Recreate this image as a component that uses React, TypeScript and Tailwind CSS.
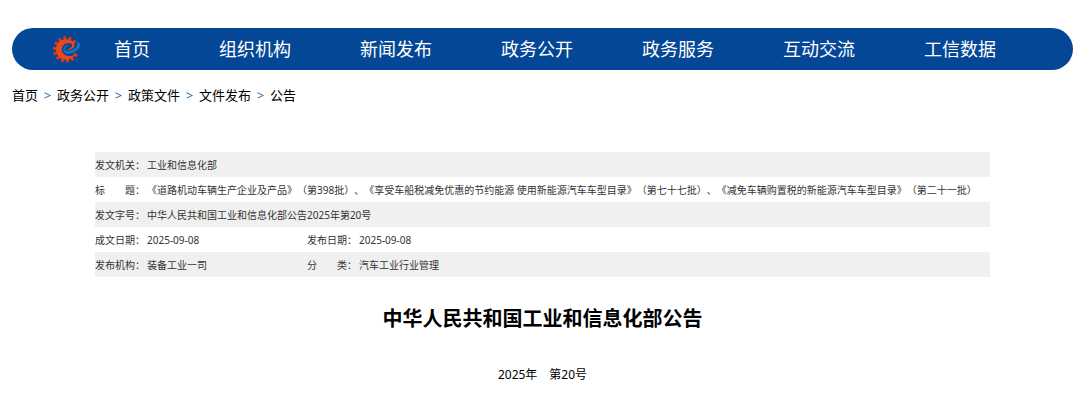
import React from "react";

const navItems = [
  "首页",
  "组织机构",
  "新闻发布",
  "政务公开",
  "政务服务",
  "互动交流",
  "工信数据",
];

const crumbs = ["首页", "政务公开", "政策文件", "文件发布", "公告"];

const rows = [
  [{ label: "发文机关：", value: "工业和信息化部" }],
  [
    {
      label: "标　　题：",
      value:
        "《道路机动车辆生产企业及产品》（第398批）、《享受车船税减免优惠的节约能源 使用新能源汽车车型目录》（第七十七批）、《减免车辆购置税的新能源汽车车型目录》（第二十一批）",
    },
  ],
  [{ label: "发文字号：", value: "中华人民共和国工业和信息化部公告2025年第20号" }],
  [
    { label: "成文日期：", value: "2025-09-08" },
    { label: "发布日期：", value: "2025-09-08" },
  ],
  [
    { label: "发布机构：", value: "装备工业一司" },
    { label: "分　　类：", value: "汽车工业行业管理" },
  ],
];

const teeth = [120, 146, 172, 198, 224, 250, 276, 302, 328, 354, 380, 406];

function Logo() {
  return (
    <svg viewBox="0 0 28 28" className="size-7 shrink-0" aria-hidden="true">
      <g fill="#dc3519">
        {teeth.map((deg) => (
          <rect
            key={deg}
            x="11.5"
            y="1.4"
            width="3"
            height="4"
            rx="0.4"
            transform={`rotate(${deg} 13 14.5)`}
          />
        ))}
      </g>
      {/* red body of the e */}
      <path
        d="M20.400 7.400C18.400 5 15.600 4 12.600 4.200C7 4.600 3 9 3.100 14.600C3.200 20.400 7.600 24.800 13.200 24.800C17.400 24.800 20.800 22.400 22.400 19C19.800 21.200 16.200 21.600 13.400 20.600C10.200 19.400 8.400 16.800 8.800 13.800C9.200 10.600 12 8.200 15.400 8C17.600 7.900 19 8.600 19.200 10C19.400 12 16.600 14 12.600 14.900C17 15.500 21 13.400 21.600 10.600C21.800 9.400 21.300 8.300 20.400 7.400Z"
        fill="#ef4715"
      />
      {/* blue swoosh */}
      <path
        d="M23.200 7.200C26 6.800 27.600 8.200 27 10.800C26 15 20.400 18.800 15.200 18.700C12.400 18.600 10.600 17.400 10.400 15.400C14.600 17 20.400 15.600 23.200 12.200C24.600 10.400 24.600 8.600 23.200 7.200Z"
        fill="#1674bd"
      />
      <path
        d="M10.400 15.400C10.200 12.400 12.400 9.800 16.200 9.400C14 10.600 12.600 12 12.200 13.600C12 14.600 12.100 15.300 12.600 16Z"
        fill="#1674bd"
      />
    </svg>
  );
}

function App() {
  return (
    <div
      lang="zh-CN"
      className="bg-white pt-7 pr-[7px] pl-3 pb-5 text-black font-['Noto_Sans','Noto_Sans_CJK_SC',sans-serif] [text-spacing-trim:space-all]"
    >
      <nav className="flex h-[42px] items-center rounded-full bg-[#054797] pl-[41px]">
        <Logo />
        <ul className="ml-[33px] flex gap-[69px] text-lg whitespace-nowrap text-white">
          {navItems.map((item) => (
            <li key={item}>
              <a href="#">{item}</a>
            </li>
          ))}
        </ul>
      </nav>

      <div className="mt-[15px] flex text-[13px] leading-5">
        {crumbs.map((crumb, i) => (
          <React.Fragment key={crumb}>
            {i > 0 && (
              <span className="w-[19px] text-center text-[#1f66b5]">&gt;</span>
            )}
            <a href="#">{crumb}</a>
          </React.Fragment>
        ))}
      </div>

      <main className="px-[83px] pt-[47px]">
        <table className="w-full table-fixed text-left text-[10px] leading-[15px] text-[#333]">
          <colgroup>
            <col className="w-[52px]" />
            <col className="w-40" />
            <col className="w-[52px]" />
            <col />
          </colgroup>
          <tbody>
            {rows.map((cells, i) => (
              <tr key={i} className="h-[25px] odd:bg-[#f0f0f0]">
                {cells.map((cell) => (
                  <React.Fragment key={cell.label}>
                    <th
                      scope="row"
                      className="pt-0.5 font-normal whitespace-nowrap"
                    >
                      {cell.label}
                    </th>
                    <td className="pt-0.5" colSpan={cells.length === 1 ? 3 : 1}>
                      {cell.value}
                    </td>
                  </React.Fragment>
                ))}
              </tr>
            ))}
          </tbody>
        </table>
        <h1 className="mt-7 text-center text-xl font-bold">
          中华人民共和国工业和信息化部公告
        </h1>
        <p className="mt-8 text-center text-xs leading-5">2025年　第20号</p>
      </main>
    </div>
  );
}

export default App;
